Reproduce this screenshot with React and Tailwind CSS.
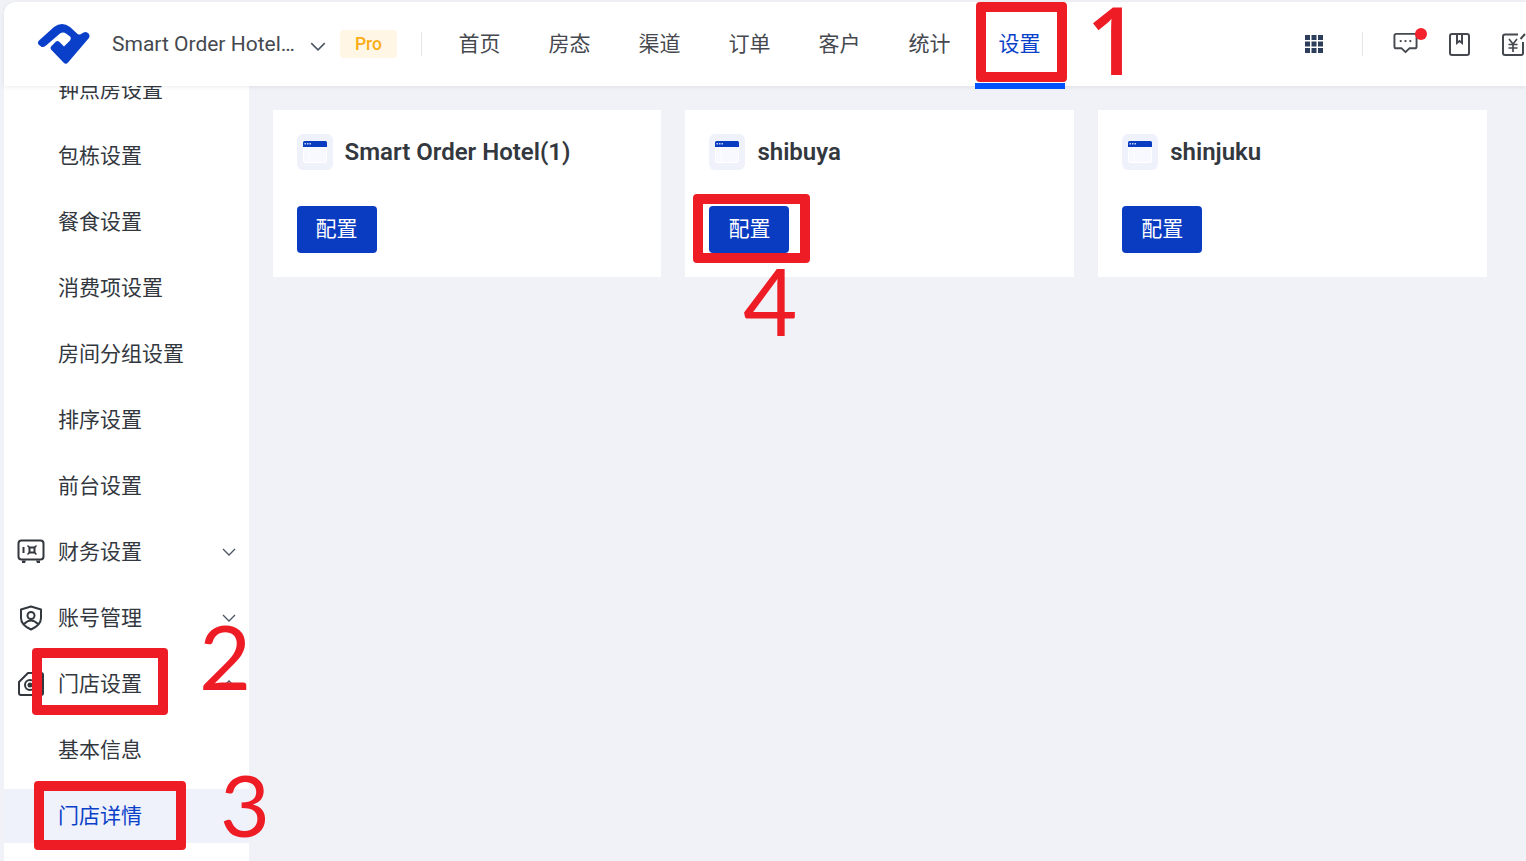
function Logo() {
  return (
    <svg width="54" height="43" viewBox="37 23 54 43" fill="#0a3fc9">
      <path d="M38.5 44.5 Q37 42.5 39 40.5 L54 27 Q62 21 70 27 L76.5 33 Q78.5 35.5 81 34 L83.5 32.5 Q86.5 31 88.5 33.5 Q90.5 36 88.5 38.5 L68 62.5 Q66 65 63.5 62.5 L51.5 50 Q49.5 48 51.5 46 L56 41.5 Q57.5 40.5 59 41.5 L64 46.5 L70 40.5 Q71.5 38 70 36.5 L66 33.5 Q63 31.5 60 33.5 L46 45.5 Q43 48 41 46.5 Z" />
    </svg>
  );
}

function WindowIcon() {
  return (
    <div className="flex h-9 w-9 shrink-0 items-center justify-center rounded-md bg-[#eff2fb]">
      <svg width="24" height="22" viewBox="0 0 24 22">
        <rect x="0.5" y="0.5" width="23" height="21" rx="1.5" fill="#f7f9fe" stroke="#ffffff" />
        <path d="M0 6V1.5A1.5 1.5 0 0 1 1.5 0h21A1.5 1.5 0 0 1 24 1.5V6z" fill="#0a3cc2" />
        <rect x="1.5" y="2" width="1.5" height="1.5" fill="#c9d4f4" />
        <rect x="4" y="2" width="1.5" height="1.5" fill="#c9d4f4" />
        <rect x="6.5" y="2" width="1.5" height="1.5" fill="#c9d4f4" />
        <rect x="5.5" y="6" width="1" height="15" fill="#ffffff" />
      </svg>
    </div>
  );
}

function Chevron({ up, className = "" }) {
  return (
    <svg width="14" height="8" viewBox="0 0 14 8" fill="none" className={className}>
      <path d={up ? "M1 7 L7 1 L13 7" : "M1 1 L7 7 L13 1"} stroke="#4b5563" strokeWidth="1.3" />
    </svg>
  );
}

function SafeIcon() {
  return (
    <svg width="28" height="26" viewBox="0 0 28 26" fill="none" stroke="#33383f" strokeWidth="2">
      <rect x="1.5" y="1.5" width="25" height="19" rx="3" />
      <path d="M5 21.5v2.5h3l1-2.5M23 21.5v2.5h-3l-1-2.5" fill="#33383f" stroke="none" />
      <path d="M6.5 8v6" />
      <rect x="12.5" y="8.5" width="5" height="5" />
      <path d="M10.5 6.5l2 2M19.5 6.5l-2 2M10.5 15.5l2-2M19.5 15.5l-2-2" strokeWidth="1.5" />
    </svg>
  );
}

function ShieldIcon() {
  return (
    <svg width="24" height="26" viewBox="0 0 24 26" fill="none" stroke="#33383f" strokeWidth="2">
      <path d="M12 1.5 L22 4.5 V13 Q22 20 12 24.5 Q2 20 2 13 V4.5 Z" strokeLinejoin="round" />
      <circle cx="12" cy="10.5" r="3.5" />
      <path d="M5 19 Q12 12 19 19" />
    </svg>
  );
}

function ShopIcon() {
  return (
    <svg width="28" height="26" viewBox="0 0 28 26" fill="none" stroke="#33383f" strokeWidth="2">
      <path d="M2 11 L11 2 H24 Q26 2 26 4 V22 Q26 24 24 24 H4 Q2 24 2 22 Z" strokeLinejoin="round" />
      <circle cx="13" cy="14" r="5" />
      <circle cx="13" cy="14" r="1.5" fill="#33383f" />
    </svg>
  );
}

function GridIcon() {
  return (
    <svg width="18" height="18" viewBox="0 0 18 18" fill="#2c3e5a">
      {[0, 6.5, 13].flatMap((y) =>
        [0, 6.5, 13].map((x) => <rect key={`${x}-${y}`} x={x} y={y} width="5" height="5" />)
      )}
    </svg>
  );
}

function ChatIcon() {
  return (
    <div className="relative h-[24px] w-[25px]">
      <svg width="25" height="23" viewBox="0 0 26 23" fill="none" stroke="#45494f" strokeWidth="2">
        <path d="M3.5 1.5H22.5Q24.5 1.5 24.5 3.5V14.5Q24.5 16.5 22.5 16.5H17L13 20.5L9 16.5H3.5Q1.5 16.5 1.5 14.5V3.5Q1.5 1.5 3.5 1.5Z" strokeLinejoin="round" />
        <circle cx="8" cy="9" r="1.2" fill="#45494f" stroke="none" />
        <circle cx="13" cy="9" r="1.2" fill="#45494f" stroke="none" />
        <circle cx="18" cy="9" r="1.2" fill="#45494f" stroke="none" />
      </svg>
      <span className="absolute right-[-9px] top-[-4px] h-[12px] w-[12px] rounded-full bg-[#f5222d]" />
    </div>
  );
}

function BookIcon() {
  return (
    <svg width="21" height="23" viewBox="0 0 21 23" fill="none" stroke="#45494f" strokeWidth="2">
      <rect x="1" y="1" width="19" height="21" rx="2" />
      <path d="M8 1.5V10L10.5 8L13 10V1.5" />
    </svg>
  );
}

function YenIcon() {
  return (
    <svg width="24" height="23" viewBox="0 0 24 23" fill="none" stroke="#45494f" strokeWidth="2">
      <path d="M16 1.5H3Q1 1.5 1 3.5V20Q1 22 3 22H19Q21 22 21 20V9" />
      <path d="M23 1 L18.5 6" />
      <path d="M7 6 L11 11 L15 6M6.5 11.5H15.5M6.5 15H15.5M11 11V19" strokeWidth="1.7" />
    </svg>
  );
}

const navItems = ["首页", "房态", "渠道", "订单", "客户", "统计", "设置"];
const subItems = ["钟点房设置", "包栋设置", "餐食设置", "消费项设置", "房间分组设置", "排序设置", "前台设置"];
const hotels = ["Smart Order Hotel(1)", "shibuya", "shinjuku"];

function Row({ icon, label, chevron }) {
  return (
    <div className="relative mb-3 flex h-[54px] items-center pl-[54px] pr-[13px]">
      {icon && <span className="absolute left-[13px] top-1/2 flex h-[28px] w-[28px] -translate-y-1/2 items-center justify-center">{icon}</span>}
      <span className="flex-1 pt-[1px]">{label}</span>
      {chevron}
    </div>
  );
}

export default function App() {
  return (
    <div className="relative flex h-[861px] w-[1526px] flex-col overflow-hidden bg-[#f0f2f7] pl-1 pt-[2px] text-[21px] text-[#33383f] font-['Roboto','Noto_Sans_CJK_SC',sans-serif]">
      <header className="relative z-10 flex h-[84px] shrink-0 items-center rounded-tl-xl bg-white pl-[33px] shadow-[0_1px_4px_rgba(0,0,0,0.08)]">
        <Logo />
        <span className="ml-[21px] w-[184px] truncate pt-[2px] text-[#45494f]">Smart Order Hotel(1)</span>
        <Chevron className="ml-[14px] mt-1 h-[9px] w-[16px]" />
        <span className="ml-[14px] flex h-7 w-[57px] items-center justify-center rounded bg-[#fff6e6] text-[17.5px] font-medium text-[#faad14]">Pro</span>
        <span className="ml-6 h-6 w-px bg-[#e5e7eb]" />
        <nav className="ml-[13px] flex h-full">
          {navItems.map((n) => (
            <div key={n} className={`relative flex h-full w-[90px] items-center justify-center pr-[1px] pt-[2px] ${n === "设置" ? "text-[#0a3fc9]" : "text-[#45494f]"}`}>
              {n}
              {n === "设置" && <span className="absolute inset-x-0 -bottom-[3px] h-[6px] bg-[#0052ff]" />}
            </div>
          ))}
        </nav>
        <div className="ml-[240px]"><GridIcon /></div>
        <span className="ml-[39px] h-6 w-px bg-[#e5e7eb]" />
        <div className="ml-[30px]"><ChatIcon /></div>
        <div className="ml-[31px]"><BookIcon /></div>
        <div className="ml-[32px]"><YenIcon /></div>
      </header>

      <div className="flex min-h-0 flex-1">
        <aside className="w-[245px] shrink-0 overflow-hidden bg-white">
          <div className="-mt-[23px]">
            {subItems.map((s) => <Row key={s} label={s} />)}
            <Row icon={<SafeIcon />} label="财务设置" chevron={<Chevron />} />
            <Row icon={<ShieldIcon />} label="账号管理" chevron={<Chevron />} />
            <Row icon={<ShopIcon />} label="门店设置" chevron={<Chevron up />} />
            <Row label="基本信息" />
            <div className="flex h-[54px] items-center bg-[#eff2fb] pl-[54px] pt-[1px] text-[#0a3fc9]">门店详情</div>
          </div>
        </aside>

        <main className="grid flex-1 grid-cols-3 content-start gap-6 pb-6 pl-[23.6px] pr-[39px] pt-6">
          {hotels.map((h) => (
            <section key={h} className="flex h-[167px] flex-col bg-white p-6">
              <div className="flex h-9 items-center gap-3">
                <WindowIcon />
                <h2 className="text-[24px] font-semibold text-[#33383f]">{h}</h2>
              </div>
              <button className="mt-9 h-[47px] w-20 rounded bg-[#0a3cc2] pt-[1px] text-[21px] text-white">配置</button>
            </section>
          ))}
        </main>
      </div>

      {/* annotations drawn over the screenshot */}
      <div className="absolute left-[976px] top-[2px] z-20 h-[80px] w-[91px] rounded-[4px] border-[10px] border-[#ee1c25]" />
      <span className="absolute left-[1086px] top-[-16px] z-20 text-[94px] font-semibold leading-[110px] text-[#ee1c25] font-['Open_Sans',sans-serif]">1</span>
      <div className="absolute left-[32px] top-[648px] z-20 h-[67px] w-[136px] rounded-[4px] border-[10px] border-[#ee1c25]" />
      <span className="absolute left-[199px] top-[600px] z-20 text-[90px] leading-[110px] text-[#ee1c25] font-['Lato',sans-serif]">2</span>
      <div className="absolute left-[34px] top-[781px] z-20 h-[69px] w-[152px] rounded-[4px] border-[10px] border-[#ee1c25]" />
      <span className="absolute left-[220px] top-[749px] z-20 text-[86px] leading-[110px] text-[#ee1c25] font-['Lato',sans-serif]">3</span>
      <div className="absolute left-[693px] top-[194px] z-20 h-[69px] w-[117px] rounded-[4px] border-[10px] border-[#ee1c25]" />
      <span className="absolute left-[743px] top-[245px] z-20 text-[94px] leading-[110px] text-[#ee1c25] font-['Lato',sans-serif]">4</span>
    </div>
  );
}
